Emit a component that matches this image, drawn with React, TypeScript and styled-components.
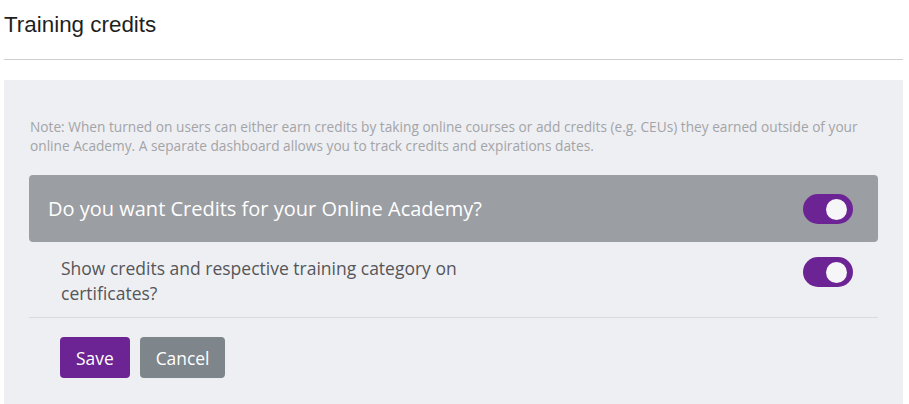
import React, { useState } from "react";
import styled, { createGlobalStyle } from "styled-components";

const Global = createGlobalStyle`
  html, body { margin: 0; padding: 0; background: #ffffff; }
  body { font-family: "Open Sans", "Liberation Sans", sans-serif; }
  * { box-sizing: border-box; }
`;

const Page = styled.div`
  padding: 0 6px 0 4px;
`;

const Title = styled.h1`
  margin: 0;
  padding-top: 12px;
  height: 60px;
  font-family: "Liberation Sans", Arial, sans-serif;
  font-weight: 400;
  font-size: 22.4px;
  line-height: 26px;
  color: #1f1f1f;
  border-bottom: 1px solid #cfcfcf;
`;

const Panel = styled.section`
  margin-top: 20px;
  background: #eeeff3;
  padding: 37px 25px 40px 25px;
  min-height: 330px;
`;

const Note = styled.p`
  margin: 0 0 20px 1px;
  font-size: 13.7px;
  line-height: 19px;
  color: #a3a4a7;
`;

const HeaderBar = styled.div`
  display: flex;
  align-items: center;
  justify-content: space-between;
  height: 67px;
  padding: 0 25px 0 19px;
  background: #9b9ea3;
  border-radius: 4px;
`;

const HeaderText = styled.span`
  font-size: 20px;
  color: #ffffff;
  line-height: 26px;
  padding-top: 1px;
`;

const OptionRow = styled.div`
  display: flex;
  align-items: flex-start;
  justify-content: space-between;
  padding: 14px 25px 12px 32px;
  border-bottom: 1px solid #d9dadd;
`;

const OptionText = styled.span`
  width: 460px;
  font-size: 17.5px;
  line-height: 24.5px;
  color: #555659;
`;

const SwitchTrack = styled.button<{ $on: boolean }>`
  width: 50px;
  height: 30px;
  border: none;
  border-radius: 15px;
  padding: 0 6px;
  margin-top: 1px;
  display: flex;
  align-items: center;
  justify-content: ${(p) => (p.$on ? "flex-end" : "flex-start")};
  background: ${(p) => (p.$on ? "#6c2394" : "#b9bcc1")};
  cursor: pointer;
  flex-shrink: 0;
`;

const SwitchKnob = styled.span`
  width: 21px;
  height: 21px;
  border-radius: 50%;
  background: #f6f5f7;
`;

const Actions = styled.div`
  display: flex;
  gap: 10px;
  padding: 19px 0 0 31px;
`;

const Button = styled.button<{ $variant: "primary" | "secondary" }>`
  height: 41px;
  padding: 0 16px;
  border: none;
  border-radius: 4px;
  font-family: "Open Sans", "Liberation Sans", sans-serif;
  font-size: 17.4px;
  color: #ffffff;
  background: ${(p) => (p.$variant === "primary" ? "#6c2394" : "#7e868c")};
  cursor: pointer;
`;

function Switch({ on, onToggle }: { on: boolean; onToggle: () => void }) {
  return (
    <SwitchTrack $on={on} onClick={onToggle} aria-pressed={on}>
      <SwitchKnob />
    </SwitchTrack>
  );
}

export default function App() {
  const [credits, setCredits] = useState(true);
  const [showOnCert, setShowOnCert] = useState(true);
  return (
    <>
      <Global />
      <Page>
        <Title>Training credits</Title>
        <Panel>
          <Note>
            Note: When turned on users can either earn credits by taking online courses or add credits (e.g. CEUs) they earned outside of your online Academy. A separate dashboard allows you to track credits and expirations dates.
          </Note>
          <HeaderBar>
            <HeaderText>Do you want Credits for your Online Academy?</HeaderText>
            <Switch on={credits} onToggle={() => setCredits(!credits)} />
          </HeaderBar>
          <OptionRow>
            <OptionText>Show credits and respective training category on certificates?</OptionText>
            <Switch on={showOnCert} onToggle={() => setShowOnCert(!showOnCert)} />
          </OptionRow>
          <Actions>
            <Button $variant="primary">Save</Button>
            <Button $variant="secondary">Cancel</Button>
          </Actions>
        </Panel>
      </Page>
    </>
  );
}
